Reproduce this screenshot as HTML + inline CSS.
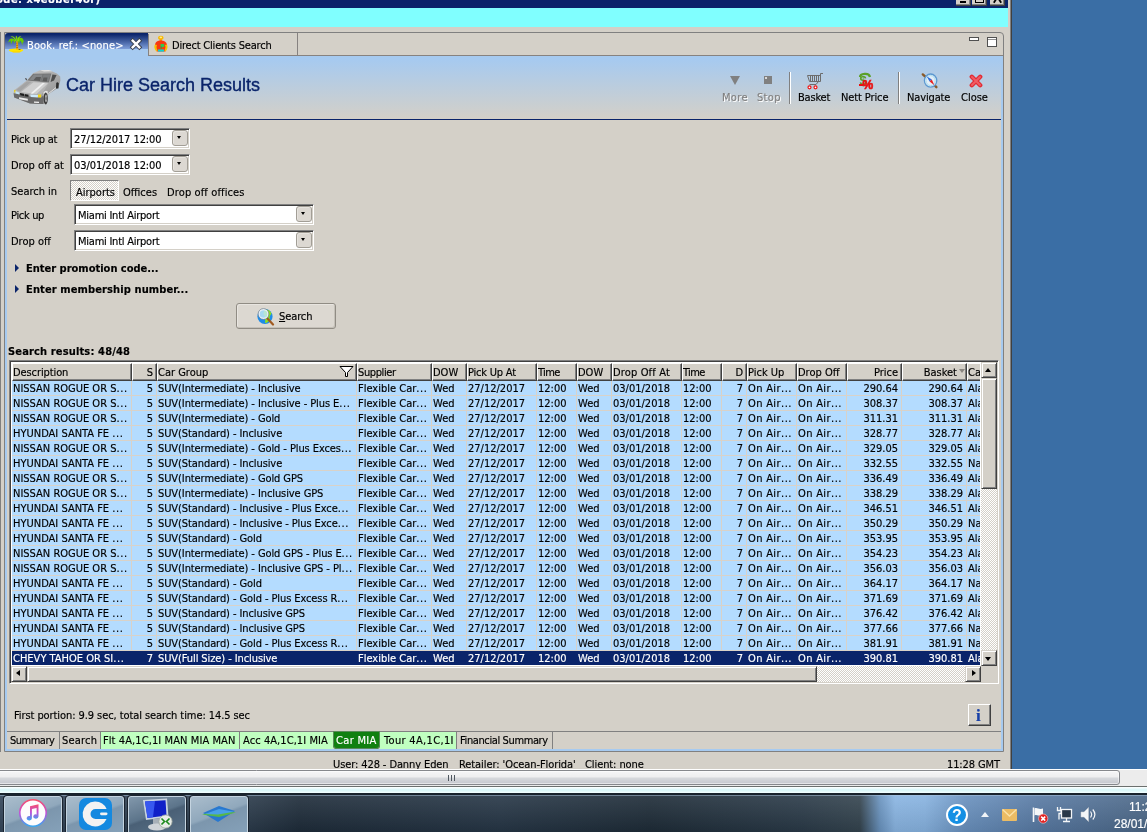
<!DOCTYPE html>
<html><head><meta charset="utf-8"><title>Car Hire Search Results</title>
<style>
*{box-sizing:border-box;margin:0;padding:0}
html,body{width:1147px;height:832px;overflow:hidden}
body{will-change:transform}
body{background:#3a6ea5;font-family:"DejaVu Sans Condensed","DejaVu Sans","Liberation Sans",sans-serif;font-size:11px;color:#000;position:relative;line-height:13px;-webkit-text-stroke:.16px}
.a{position:absolute;white-space:nowrap}
.x{position:absolute;white-space:nowrap;line-height:20px;height:20px}
.t{position:absolute;white-space:nowrap;line-height:13px;height:13px}
#win{left:0;top:0;width:1012px;height:770px;background:#d4d0c8}
#navy{left:0;top:0;width:1008px;height:8px;background:#0a246a;overflow:hidden}
#cyan{left:0;top:8px;width:1008px;height:19px;background:#80ffff}
.cap{top:0;height:6px;width:15px;background:#d4d0c8;border-right:1px solid #404040;border-bottom:1px solid #404040;box-shadow:inset -1px -1px 0 #808080}
/* tab folder */
#folder{left:4px;top:32px;width:1000px;height:720px;border:1px solid #808080;border-radius:0 4px 0 0}
#tab1{left:5px;top:33px;width:143px;height:23px;background:linear-gradient(#0a246a 0,#0a246a 1px,#7e9fda 16px,#a6caf0 16px,#a6caf0 100%);border-radius:3px 0 0 0;color:#fff}
#content{left:5px;top:56px;width:998px;height:695px;background:#d4d0c8;border:2px solid #a6caf0;border-top:0}
#hdr{left:7px;top:56px;width:994px;height:63px;background:linear-gradient(#a6caf0 0,#a6caf0 3px,#d4d0c8 100%)}
#hline{left:7px;top:119px;width:994px;height:1px;background:#0a246a}
h1{position:absolute;left:66px;top:74px;font-family:"Liberation Sans",sans-serif;font-weight:normal;font-size:18px;line-height:22px;color:#0a246a;white-space:nowrap;letter-spacing:.2px}
.dis{color:#808080;text-shadow:1px 1px 0 #fff}
.vsep{top:72px;width:2px;height:32px;border-left:1px solid #808080;border-right:1px solid #fff}
/* inputs */
.sunk{background:#fff;border:1px solid;border-color:#808080 #fff #fff #808080;box-shadow:inset 1px 1px 0 #404040,inset -1px -1px 0 #d4d0c8}
.ddb{width:16px;height:16px;background:#dcd8d2;border:1px solid #a29e96;border-radius:3px;box-shadow:inset 1px 1px 0 #e6e3de}
.ddb:after{content:"";position:absolute;left:4px;top:5px;border:2.5px solid transparent;border-top:3px solid #000;border-bottom:0;width:0;height:0}
.tri{width:0;height:0;border:4px solid transparent;border-left:4px solid #0a246a;border-right:0}
b.t{font-weight:bold}
/* table */
#tbl{left:9px;top:360px;width:990px;height:324px;border:1px solid;border-color:#808080 #fff #fff #808080;box-shadow:inset 1px 1px 0 #404040,inset -1px -1px 0 #d4d0c8;background:#fff;overflow:hidden}
#tin{left:2px;top:2px;width:968px;height:303px;overflow:hidden;background:#b4dcff}
.thead{position:absolute;left:0;top:0;height:18px;width:970px;background:#d4d0c8}
.th{position:absolute;top:0;height:18px;background:#d4d0c8;border:1px solid;border-color:#fff #404040 #404040 #fff;box-shadow:inset -1px -1px 0 #808080;padding:2px 3px 0 0;line-height:13px;white-space:nowrap;overflow:hidden}
.th.r{text-align:right}
.flt{position:absolute;right:2px;top:2px}
.sortd{position:absolute;right:1px;top:5px;border:3.5px solid transparent;border-top:4px solid #8a8680;border-bottom:0;width:0;height:0}
.tr{position:absolute;left:0;width:970px;height:15px;background:#b4dcff;border-bottom:1px solid #d9d2c8}
.tr.sel{background:#0a246a;color:#fff;border-bottom-color:#fff}
.td{position:absolute;top:0;height:15px;line-height:14px;padding:1px 3px 0 1px;white-space:nowrap;overflow:hidden;border-right:1px solid #d9d2c8}
.tr.sel .td{border-right-color:#0a246a;height:14px}
.td.r{text-align:right}
.td.cg{letter-spacing:-.09px}
.td.oa{letter-spacing:.35px}
.e{font-style:normal;letter-spacing:.6px;margin-right:-.6px}
.sb{background:#d4d0c8;border:1px solid;border-color:#d4d0c8 #404040 #404040 #d4d0c8;box-shadow:inset 1px 1px 0 #fff,inset -1px -1px 0 #808080}
.track{background:#eae8e4 repeating-conic-gradient(#fff 0 25%,#d4d0c8 0 50%) 0 0/2px 2px}
.ar{position:absolute;width:0;height:0;border:3.5px solid transparent}
.ar.up{left:3px;top:0px;border-bottom:4px solid #000;border-top:0;top:5px}
.ar.dn{left:3px;top:6px;border-top:4px solid #000;border-bottom:0}
.ar.lf{left:4px;top:3px;border-right:4px solid #000;border-left:0}
.ar.rt{left:6px;top:3px;border-left:4px solid #000;border-right:0}
/* bottom tabs */
.bt{position:absolute;top:732px;height:17px;line-height:13px;padding:3px 0 0 4px;white-space:nowrap;border-right:1px solid #808080}
.g{background:#c0ffc0}
.tbb{top:796px;width:58px;height:40px;border:1px solid #c4d4e0;border-radius:3px;background:linear-gradient(160deg,#aabdcc 0,#90a8bc 45%,#7c96ad 50%,#86a2ba 100%);box-shadow:0 0 0 1px #1a2430}
</style></head><body>
<div id="win" class="a"></div>
<div id="navy" class="a"><span class="a" style="left:-4px;top:-7px;font-weight:bold;font-size:11px;color:#fff;letter-spacing:.5px">ode: x4e8ber4or)</span></div>
<div id="cyan" class="a"></div>
<div class="a cap" style="left:956px"></div><div class="a cap" style="left:972px"></div><div class="a cap" style="left:990px"></div>
<div class="a" style="left:960px;top:1px;width:6px;height:2px;background:#000"></div>
<div class="a" style="left:975px;top:0;width:9px;height:3px;border:1px solid #000;border-top:0"></div>
<svg class="a" style="left:993px;top:0" width="9" height="4" viewBox="0 0 9 4"><path d="M3.2 -1L0.8 2.8M5.8 -1L8.2 2.8" stroke="#000" stroke-width="1.8"/></svg>
<div class="a" style="left:0;top:32px;width:1px;height:720px;background:#808080"></div>
<div class="a" style="left:1010px;top:0;width:1px;height:770px;background:#808080"></div><div class="a" style="left:1011px;top:0;width:1px;height:770px;background:#404040"></div>

<div id="folder" class="a"></div>
<div id="content" class="a"></div>
<div id="tab1" class="a"></div>
<div class="a" style="left:148px;top:55px;width:855px;height:1px;background:#868280"></div>
<div class="a" style="left:148px;top:34px;width:1px;height:21px;background:#868280"></div>
<div class="a" style="left:297px;top:33px;width:1px;height:22px;background:#868280"></div>
<div id="hdr" class="a"></div>
<div id="hline" class="a"></div>

<!-- top tabs -->
<svg class="a" style="left:6px;top:34px" width="20" height="20" viewBox="6 34 20 20">
 <ellipse cx="16" cy="50.3" rx="7.2" ry="1.9" fill="#ffe600"/><path d="M12 51.2H21L20 52.4H12.8Z" fill="#ffd400"/>
 <path d="M16.2 41C16.6 44 16.3 47 15.9 49.6L18 49.6C18.4 46.5 18.3 43.5 17.6 41Z" fill="#f4b000"/>
 <path d="M16.6 43.4L17.6 43M16.4 45.6L17.8 45.2M16.4 47.6L17.8 47.4" stroke="#b05000" stroke-width=".9"/>
 <path d="M18.6 49.2L20.6 49L20.2 50L18.4 50Z" fill="#805010"/>
 <path d="M16.4 41.4C14 38 11 37.6 9.4 39.6L8 42.4L9.6 41.6L10.6 40.6L11 44.2L12.6 41L13.6 40.4L14 43.4L15.4 41.2Z" fill="#68cc00"/>
 <path d="M17 41.2C18.4 37.6 21.6 37 23 39L24.2 42.6L23 41.4L22.4 45L21 41.6L19.8 40.8L19.2 44L18 41.4Z" fill="#68cc00"/>
 <path d="M16.8 41C15.4 37.4 13 35.8 10.6 36.4C13 36.6 14.6 38.4 15.4 41ZM17 41C17.4 37.6 19 35.8 21.4 36.2C19.6 37 18.6 38.8 18.4 41Z" fill="#8ce000"/>
 <path d="M16.6 40.6C15.6 38 15.4 36.6 16.2 35.8C17.4 36.6 17.6 38.4 17.4 40.6Z" fill="#7cd800"/>
</svg>
<svg class="a" style="left:131px;top:39px;overflow:visible" width="10" height="10" viewBox="0 0 12 12"><path d="M2 2L10 10M10 2L2 10" stroke="#38404c" stroke-width="5" stroke-linecap="square"/><path d="M2 2L10 10M10 2L2 10" stroke="#fff" stroke-width="2.8" stroke-linecap="square"/></svg>
<svg class="a" style="left:152px;top:34px" width="18" height="20" viewBox="152 34 18 20">
 <ellipse cx="160.8" cy="37.8" rx="2.7" ry="2.1" fill="#f8b800"/><ellipse cx="160.8" cy="37.4" rx="1.3" ry=".8" fill="#fde890"/>
 <path d="M159.6 39.4H162V41.4H159.6Z" fill="#f8a000"/>
 <path d="M155 45C155.4 41.6 158 40.6 160.8 40.6S166.4 41.6 167 45L165.4 51.6H156.8Z" fill="#f83810"/>
 <path d="M155 44.4C153.6 46.4 154.4 49 156.4 51.4L157.6 50.6C156.4 48.6 156.2 46.4 157 45ZM166.8 44.4C168.2 46.4 167.6 49 165.6 51.4L164.4 50.6C165.6 48.6 165.8 46.4 165 45Z" fill="#f8c000"/>
 <rect x="160.6" y="44" width="3.6" height="3" fill="#30c850"/><rect x="160.6" y="46.4" width="1.2" height="2.4" fill="#30a040"/>
 <rect x="158" y="49.4" width="6" height="2.2" fill="#10d0d0"/>
</svg>
<div class="a" style="left:969px;top:37px;width:10px;height:4px;background:#fff;border:1px solid #505050"></div>
<div class="a" style="left:987px;top:37px;width:10px;height:10px;background:linear-gradient(#fff 1px,#909090 1px,#909090 2px,#fff 2px);border:1px solid #505050"></div>


<!-- header -->
<svg class="a" style="left:8px;top:64px" width="60" height="46" viewBox="8 64 60 46">
 <defs><linearGradient id="cg" x1="0" y1="0" x2="1" y2="1"><stop offset="0" stop-color="#cfcfcf"/><stop offset=".55" stop-color="#a9a9a9"/><stop offset="1" stop-color="#8a8a8a"/></linearGradient></defs>
 <path d="M13.5 93L14.6 90L26.8 80.4L32.9 73.2L40 70.2L49 70L56.8 73.6L60.2 76.6L60.4 80.4L58.6 87.5L48 94.5L46.6 104.2L43.4 103.9L30 103.4L14.2 97.6Z" fill="url(#cg)"/>
 <path d="M40 70.2L49 70L52.5 71.2L44 71.6Z" fill="#e6e6e6"/>
 <path d="M27.2 80.4L33.2 73.8L51.4 73.4L48.8 82.4Z" fill="#747474"/>
 <path d="M29.5 79.8L34 74.6L42.5 74.4L40.5 81Z" fill="#858789"/><path d="M43.5 74.4L50.4 74.2L48.2 81.6L41.5 81Z" fill="#7c7e80"/>
 <path d="M33.5 80.2L36 77L41 77L40 81ZM42.5 81L43.5 77.5L47.5 77.6L46.8 81.6Z" fill="#5c5c5c"/>
 <path d="M52.4 74.4L56.6 75L54 80.4L50.6 82Z" fill="#4e4e4e"/>
 <path d="M25 78L26.4 78.2L27.2 80.2L26 80.2Z" fill="#4a4a4a"/>
 <path d="M14.8 90.2L26.8 80.8L48.8 82.8L43.2 92L41 95L19.8 93Z" fill="#b4b4b4"/>
 <path d="M21 92L33.5 82.2L48 83.2L36.5 94Z" fill="#cfcfcf"/><path d="M30.5 93.4L42.5 83L45 83.1L33 93.8Z" fill="#f0f0f0"/>
 <path d="M16 90L27 81.4L31.5 81.8L20 91.5Z" fill="#a4a4a4"/>
 <path d="M13.6 93.2L19.5 94L30 96.5L41.4 97.6L43.6 95L43.2 103.9L30 103.4L14.2 97.6Z" fill="#6a6a6a"/>
 <path d="M14 90L15.3 89.8L16 92.5L14.4 92.6Z" fill="#e8d020"/><path d="M15.4 91L19.2 92.6L19.4 94.6L15.6 93.4Z" fill="#c4e4f8"/>
 <path d="M19.8 93L24 93.8L24 96L20.4 95.2ZM24.6 94L28.6 94.8L28.4 96.8L24.8 96.2Z" fill="#1c1c1c"/>
 <path d="M30.2 94.6L38 95L37.8 97.4L30.8 97Z" fill="#cdeafc"/><path d="M38 94.4L41.2 94.6L41 97.6L38 97.4Z" fill="#f0d418"/>
 <path d="M19 97.2L27.8 98.8L27.8 100.8L19.2 99.2Z" fill="#ececec"/><path d="M34 101.6L39 101.8L39 103L34 102.8Z" fill="#f4f4f4"/>
 <path d="M43.4 92.6Q45.4 89.6 47.8 91.6L47 104L44.6 104.6Z" fill="#e4e4e4"/>
 <ellipse cx="45.7" cy="98.4" rx="2.1" ry="6" fill="#3a3a3a"/><ellipse cx="46" cy="98.4" rx="1.1" ry="3.8" fill="#a8a8a8"/><ellipse cx="46.1" cy="98.4" rx=".5" ry="1.6" fill="#5a5a5a"/>
 <path d="M56.2 83Q57.6 81.6 58.8 83.2L58.4 88.4L56 88.4Z" fill="#2e2e2e"/>
 <path d="M48.4 93.6L56 87.6" stroke="#e8e8e8" stroke-width=".9"/>
</svg>
<div class="a" style="left:730px;top:76px;width:0;height:0;border:5.5px solid transparent;border-top:9px solid #808080;border-bottom:0"></div>
<div class="a" style="left:764px;top:76px;width:8px;height:8px;background:#808080"></div>
<div class="a" style="left:765px;top:77px;width:2px;height:2px;background:#d8d8d8"></div>
<div class="a vsep" style="left:789px"></div>
<svg class="a" style="left:804px;top:70px" width="22" height="22" viewBox="804 70 22 22"><path d="M807.5 75.5H820.5V81.5H809.5ZM820.5 76V73.5H823M810.5 76V81M812.5 76V81M814.5 76V81M816.5 76V81M818.5 76V81M818.5 81.5L816 84.5H809.5" fill="none" stroke="#6c6c6c" stroke-width="1"/><circle cx="809.5" cy="87.3" r="1.5" fill="#fff" stroke="#f01010" stroke-width="1.2"/><circle cx="815.5" cy="87.3" r="1.5" fill="#fff" stroke="#f01010" stroke-width="1.2"/></svg>
<svg class="a" style="left:856px;top:70px" width="22" height="22" viewBox="856 70 22 22"><path d="M860 77C860 73.5 869 72 870 77" fill="none" stroke="#5aa028" stroke-width="2.2"/><text x="859.5" y="85" font-family="Liberation Sans,sans-serif" font-weight="bold" font-size="13" fill="#5aa028">$</text><text x="862.5" y="88.5" font-family="Liberation Sans,sans-serif" font-weight="bold" font-size="12" fill="#e81010" stroke="#e81010" stroke-width=".6">%</text><rect x="859" y="84" width="4.5" height="2" fill="#e81010"/></svg>
<div class="a vsep" style="left:898px"></div>
<svg class="a" style="left:920px;top:70px" width="20" height="20" viewBox="920 70 20 20"><path d="M922.8 74.4L925 76.4M936.4 87.2L934.4 85.2" stroke="#8a5a28" stroke-width="2.4" stroke-linecap="round"/><ellipse cx="930.6" cy="80.6" rx="6.2" ry="6.6" fill="#e4eef8" stroke="#5c98d0" stroke-width="1.3"/><ellipse cx="930.6" cy="80.6" rx="4.6" ry="5" fill="none" stroke="#a8dcec" stroke-width="1"/><path d="M926.6 76.2L931.8 79.6L929.6 81.6Z" fill="#2c6cd8"/><path d="M934.4 85.2L929.6 81.6L931.8 79.6Z" fill="#e82020"/></svg>
<svg class="a" style="left:969px;top:74px" width="14" height="14" viewBox="0 0 14 14"><path d="M2.8 2.8L11.2 11.2M11.2 2.8L2.8 11.2" stroke="#e22c34" stroke-width="4.4" stroke-linecap="round"/><path d="M3 3L11 11M11 3L3 11" stroke="#f25c64" stroke-width="2" stroke-linecap="round"/></svg>


<!-- form -->
<div class="a sunk" style="left:70px;top:128px;width:120px;height:21px"></div><div class="a ddb" style="left:172px;top:130px"></div>
<div class="a sunk" style="left:70px;top:154px;width:120px;height:21px"></div><div class="a ddb" style="left:172px;top:156px"></div>
<div class="a" style="left:70px;top:180px;width:49px;height:21px;background:#eae8e4 repeating-conic-gradient(#fff 0 25%,#d4d0c8 0 50%) 0 0/2px 2px;border:1px solid;border-color:#808080 #fff #fff #808080"></div>
<div class="a sunk" style="left:74px;top:204px;width:240px;height:21px"></div><div class="a ddb" style="left:296px;top:206px"></div>
<div class="a sunk" style="left:74px;top:230px;width:240px;height:21px"></div><div class="a ddb" style="left:296px;top:232px"></div>
<div class="a tri" style="left:15px;top:264px"></div>
<div class="a tri" style="left:15px;top:285px"></div>
<div class="a" style="left:236px;top:303px;width:100px;height:26px;border:1px solid #908c84;border-radius:3px;background:#dcd8d1;box-shadow:inset 1px 1px 0 #e8e5e0,inset -1px -1px 0 #c4c0b8"></div>
<svg class="a" style="left:256px;top:307px" width="19" height="19" viewBox="0 0 19 19"><circle cx="9" cy="9.5" r="7.6" fill="#1e8ce8"/><path d="M9 3C12 2 15 4 15.5 7C14 8 13 10 14 13C12 15 10 16.5 9 16C10 13 8 12 9 9C7 8 7 5 9 3Z" fill="#8ee020"/><path d="M11 11L17 17.5" stroke="#a05a20" stroke-width="2.2" stroke-linecap="round"/><circle cx="7.5" cy="7" r="4.6" fill="#bfe6f4" fill-opacity=".85" stroke="#f0f4f8" stroke-width="1.5"/><circle cx="7.5" cy="7" r="5.4" fill="none" stroke="#6c7c8c" stroke-width=".7"/></svg>
<span class="x" style="left:279px;top:307px;letter-spacing:-.1px"><u>S</u>earch</span>

<div id="tbl" class="a"><div id="tin" class="a">
<div class="thead">
<div class="th" style="left:0px;width:120px;letter-spacing:-0.10px"><span>Description</span></div>
<div class="th r" style="left:120px;width:25px"><span>S</span></div>
<div class="th" style="left:145px;width:200px"><span>Car Group</span><svg class="flt" width="15" height="11" viewBox="0 0 15 11"><path d="M1 0.5H14L8.5 6.5V10.5H6.5V6.5Z" fill="#fff" stroke="#000" stroke-width="1"/></svg></div>
<div class="th" style="left:345px;width:75px;letter-spacing:-0.40px"><span>Supplier</span></div>
<div class="th" style="left:420px;width:35px"><span>DOW</span></div>
<div class="th" style="left:455px;width:70px;letter-spacing:-0.20px"><span>Pick Up At</span></div>
<div class="th" style="left:525px;width:40px;letter-spacing:-0.60px"><span>Time</span></div>
<div class="th" style="left:565px;width:35px"><span>DOW</span></div>
<div class="th" style="left:600px;width:70px;letter-spacing:0.15px"><span>Drop Off At</span></div>
<div class="th" style="left:670px;width:40px;letter-spacing:-0.60px"><span>Time</span></div>
<div class="th r" style="left:710px;width:25px"><span>D</span></div>
<div class="th" style="left:735px;width:50px"><span>Pick Up</span></div>
<div class="th" style="left:785px;width:50px"><span>Drop Off</span></div>
<div class="th r" style="left:835px;width:55px"><span>Price</span></div>
<div class="th r" style="left:890px;width:65px;padding-right:9px"><span>Basket</span><i class="sortd"></i></div>
<div class="th" style="left:955px;width:40px"><span>Ca</span></div>
</div>
<div class="tr" style="top:18px">
<div class="td" style="left:0px;width:120px">NISSAN ROGUE OR S<i class="e">...</i></div>
<div class="td r" style="left:120px;width:25px">5</div>
<div class="td cg" style="left:145px;width:200px">SUV(Intermediate) - Inclusive</div>
<div class="td" style="left:345px;width:75px">Flexible Car<i class="e">...</i></div>
<div class="td" style="left:420px;width:35px">Wed</div>
<div class="td" style="left:455px;width:70px">27/12/2017</div>
<div class="td" style="left:525px;width:40px">12:00</div>
<div class="td" style="left:565px;width:35px">Wed</div>
<div class="td" style="left:600px;width:70px">03/01/2018</div>
<div class="td" style="left:670px;width:40px">12:00</div>
<div class="td r" style="left:710px;width:25px">7</div>
<div class="td oa" style="left:735px;width:50px">On Air<i class="e">...</i></div>
<div class="td oa" style="left:785px;width:50px">On Air<i class="e">...</i></div>
<div class="td r" style="left:835px;width:55px">290.64</div>
<div class="td r" style="left:890px;width:65px">290.64</div>
<div class="td" style="left:955px;width:40px">Ala</div>
</div>
<div class="tr" style="top:33px">
<div class="td" style="left:0px;width:120px">NISSAN ROGUE OR S<i class="e">...</i></div>
<div class="td r" style="left:120px;width:25px">5</div>
<div class="td cg" style="left:145px;width:200px">SUV(Intermediate) - Inclusive - Plus E<i class="e">...</i></div>
<div class="td" style="left:345px;width:75px">Flexible Car<i class="e">...</i></div>
<div class="td" style="left:420px;width:35px">Wed</div>
<div class="td" style="left:455px;width:70px">27/12/2017</div>
<div class="td" style="left:525px;width:40px">12:00</div>
<div class="td" style="left:565px;width:35px">Wed</div>
<div class="td" style="left:600px;width:70px">03/01/2018</div>
<div class="td" style="left:670px;width:40px">12:00</div>
<div class="td r" style="left:710px;width:25px">7</div>
<div class="td oa" style="left:735px;width:50px">On Air<i class="e">...</i></div>
<div class="td oa" style="left:785px;width:50px">On Air<i class="e">...</i></div>
<div class="td r" style="left:835px;width:55px">308.37</div>
<div class="td r" style="left:890px;width:65px">308.37</div>
<div class="td" style="left:955px;width:40px">Ala</div>
</div>
<div class="tr" style="top:48px">
<div class="td" style="left:0px;width:120px">NISSAN ROGUE OR S<i class="e">...</i></div>
<div class="td r" style="left:120px;width:25px">5</div>
<div class="td cg" style="left:145px;width:200px">SUV(Intermediate) - Gold</div>
<div class="td" style="left:345px;width:75px">Flexible Car<i class="e">...</i></div>
<div class="td" style="left:420px;width:35px">Wed</div>
<div class="td" style="left:455px;width:70px">27/12/2017</div>
<div class="td" style="left:525px;width:40px">12:00</div>
<div class="td" style="left:565px;width:35px">Wed</div>
<div class="td" style="left:600px;width:70px">03/01/2018</div>
<div class="td" style="left:670px;width:40px">12:00</div>
<div class="td r" style="left:710px;width:25px">7</div>
<div class="td oa" style="left:735px;width:50px">On Air<i class="e">...</i></div>
<div class="td oa" style="left:785px;width:50px">On Air<i class="e">...</i></div>
<div class="td r" style="left:835px;width:55px">311.31</div>
<div class="td r" style="left:890px;width:65px">311.31</div>
<div class="td" style="left:955px;width:40px">Ala</div>
</div>
<div class="tr" style="top:63px">
<div class="td" style="left:0px;width:120px">HYUNDAI SANTA FE <i class="e">...</i></div>
<div class="td r" style="left:120px;width:25px">5</div>
<div class="td cg" style="left:145px;width:200px">SUV(Standard) - Inclusive</div>
<div class="td" style="left:345px;width:75px">Flexible Car<i class="e">...</i></div>
<div class="td" style="left:420px;width:35px">Wed</div>
<div class="td" style="left:455px;width:70px">27/12/2017</div>
<div class="td" style="left:525px;width:40px">12:00</div>
<div class="td" style="left:565px;width:35px">Wed</div>
<div class="td" style="left:600px;width:70px">03/01/2018</div>
<div class="td" style="left:670px;width:40px">12:00</div>
<div class="td r" style="left:710px;width:25px">7</div>
<div class="td oa" style="left:735px;width:50px">On Air<i class="e">...</i></div>
<div class="td oa" style="left:785px;width:50px">On Air<i class="e">...</i></div>
<div class="td r" style="left:835px;width:55px">328.77</div>
<div class="td r" style="left:890px;width:65px">328.77</div>
<div class="td" style="left:955px;width:40px">Ala</div>
</div>
<div class="tr" style="top:78px">
<div class="td" style="left:0px;width:120px">NISSAN ROGUE OR S<i class="e">...</i></div>
<div class="td r" style="left:120px;width:25px">5</div>
<div class="td cg" style="left:145px;width:200px">SUV(Intermediate) - Gold - Plus Exces<i class="e">...</i></div>
<div class="td" style="left:345px;width:75px">Flexible Car<i class="e">...</i></div>
<div class="td" style="left:420px;width:35px">Wed</div>
<div class="td" style="left:455px;width:70px">27/12/2017</div>
<div class="td" style="left:525px;width:40px">12:00</div>
<div class="td" style="left:565px;width:35px">Wed</div>
<div class="td" style="left:600px;width:70px">03/01/2018</div>
<div class="td" style="left:670px;width:40px">12:00</div>
<div class="td r" style="left:710px;width:25px">7</div>
<div class="td oa" style="left:735px;width:50px">On Air<i class="e">...</i></div>
<div class="td oa" style="left:785px;width:50px">On Air<i class="e">...</i></div>
<div class="td r" style="left:835px;width:55px">329.05</div>
<div class="td r" style="left:890px;width:65px">329.05</div>
<div class="td" style="left:955px;width:40px">Ala</div>
</div>
<div class="tr" style="top:93px">
<div class="td" style="left:0px;width:120px">HYUNDAI SANTA FE <i class="e">...</i></div>
<div class="td r" style="left:120px;width:25px">5</div>
<div class="td cg" style="left:145px;width:200px">SUV(Standard) - Inclusive</div>
<div class="td" style="left:345px;width:75px">Flexible Car<i class="e">...</i></div>
<div class="td" style="left:420px;width:35px">Wed</div>
<div class="td" style="left:455px;width:70px">27/12/2017</div>
<div class="td" style="left:525px;width:40px">12:00</div>
<div class="td" style="left:565px;width:35px">Wed</div>
<div class="td" style="left:600px;width:70px">03/01/2018</div>
<div class="td" style="left:670px;width:40px">12:00</div>
<div class="td r" style="left:710px;width:25px">7</div>
<div class="td oa" style="left:735px;width:50px">On Air<i class="e">...</i></div>
<div class="td oa" style="left:785px;width:50px">On Air<i class="e">...</i></div>
<div class="td r" style="left:835px;width:55px">332.55</div>
<div class="td r" style="left:890px;width:65px">332.55</div>
<div class="td" style="left:955px;width:40px">Na</div>
</div>
<div class="tr" style="top:108px">
<div class="td" style="left:0px;width:120px">NISSAN ROGUE OR S<i class="e">...</i></div>
<div class="td r" style="left:120px;width:25px">5</div>
<div class="td cg" style="left:145px;width:200px">SUV(Intermediate) - Gold GPS</div>
<div class="td" style="left:345px;width:75px">Flexible Car<i class="e">...</i></div>
<div class="td" style="left:420px;width:35px">Wed</div>
<div class="td" style="left:455px;width:70px">27/12/2017</div>
<div class="td" style="left:525px;width:40px">12:00</div>
<div class="td" style="left:565px;width:35px">Wed</div>
<div class="td" style="left:600px;width:70px">03/01/2018</div>
<div class="td" style="left:670px;width:40px">12:00</div>
<div class="td r" style="left:710px;width:25px">7</div>
<div class="td oa" style="left:735px;width:50px">On Air<i class="e">...</i></div>
<div class="td oa" style="left:785px;width:50px">On Air<i class="e">...</i></div>
<div class="td r" style="left:835px;width:55px">336.49</div>
<div class="td r" style="left:890px;width:65px">336.49</div>
<div class="td" style="left:955px;width:40px">Ala</div>
</div>
<div class="tr" style="top:123px">
<div class="td" style="left:0px;width:120px">NISSAN ROGUE OR S<i class="e">...</i></div>
<div class="td r" style="left:120px;width:25px">5</div>
<div class="td cg" style="left:145px;width:200px">SUV(Intermediate) - Inclusive GPS</div>
<div class="td" style="left:345px;width:75px">Flexible Car<i class="e">...</i></div>
<div class="td" style="left:420px;width:35px">Wed</div>
<div class="td" style="left:455px;width:70px">27/12/2017</div>
<div class="td" style="left:525px;width:40px">12:00</div>
<div class="td" style="left:565px;width:35px">Wed</div>
<div class="td" style="left:600px;width:70px">03/01/2018</div>
<div class="td" style="left:670px;width:40px">12:00</div>
<div class="td r" style="left:710px;width:25px">7</div>
<div class="td oa" style="left:735px;width:50px">On Air<i class="e">...</i></div>
<div class="td oa" style="left:785px;width:50px">On Air<i class="e">...</i></div>
<div class="td r" style="left:835px;width:55px">338.29</div>
<div class="td r" style="left:890px;width:65px">338.29</div>
<div class="td" style="left:955px;width:40px">Ala</div>
</div>
<div class="tr" style="top:138px">
<div class="td" style="left:0px;width:120px">HYUNDAI SANTA FE <i class="e">...</i></div>
<div class="td r" style="left:120px;width:25px">5</div>
<div class="td cg" style="left:145px;width:200px">SUV(Standard) - Inclusive - Plus Exce<i class="e">...</i></div>
<div class="td" style="left:345px;width:75px">Flexible Car<i class="e">...</i></div>
<div class="td" style="left:420px;width:35px">Wed</div>
<div class="td" style="left:455px;width:70px">27/12/2017</div>
<div class="td" style="left:525px;width:40px">12:00</div>
<div class="td" style="left:565px;width:35px">Wed</div>
<div class="td" style="left:600px;width:70px">03/01/2018</div>
<div class="td" style="left:670px;width:40px">12:00</div>
<div class="td r" style="left:710px;width:25px">7</div>
<div class="td oa" style="left:735px;width:50px">On Air<i class="e">...</i></div>
<div class="td oa" style="left:785px;width:50px">On Air<i class="e">...</i></div>
<div class="td r" style="left:835px;width:55px">346.51</div>
<div class="td r" style="left:890px;width:65px">346.51</div>
<div class="td" style="left:955px;width:40px">Ala</div>
</div>
<div class="tr" style="top:153px">
<div class="td" style="left:0px;width:120px">HYUNDAI SANTA FE <i class="e">...</i></div>
<div class="td r" style="left:120px;width:25px">5</div>
<div class="td cg" style="left:145px;width:200px">SUV(Standard) - Inclusive - Plus Exce<i class="e">...</i></div>
<div class="td" style="left:345px;width:75px">Flexible Car<i class="e">...</i></div>
<div class="td" style="left:420px;width:35px">Wed</div>
<div class="td" style="left:455px;width:70px">27/12/2017</div>
<div class="td" style="left:525px;width:40px">12:00</div>
<div class="td" style="left:565px;width:35px">Wed</div>
<div class="td" style="left:600px;width:70px">03/01/2018</div>
<div class="td" style="left:670px;width:40px">12:00</div>
<div class="td r" style="left:710px;width:25px">7</div>
<div class="td oa" style="left:735px;width:50px">On Air<i class="e">...</i></div>
<div class="td oa" style="left:785px;width:50px">On Air<i class="e">...</i></div>
<div class="td r" style="left:835px;width:55px">350.29</div>
<div class="td r" style="left:890px;width:65px">350.29</div>
<div class="td" style="left:955px;width:40px">Na</div>
</div>
<div class="tr" style="top:168px">
<div class="td" style="left:0px;width:120px">HYUNDAI SANTA FE <i class="e">...</i></div>
<div class="td r" style="left:120px;width:25px">5</div>
<div class="td cg" style="left:145px;width:200px">SUV(Standard) - Gold</div>
<div class="td" style="left:345px;width:75px">Flexible Car<i class="e">...</i></div>
<div class="td" style="left:420px;width:35px">Wed</div>
<div class="td" style="left:455px;width:70px">27/12/2017</div>
<div class="td" style="left:525px;width:40px">12:00</div>
<div class="td" style="left:565px;width:35px">Wed</div>
<div class="td" style="left:600px;width:70px">03/01/2018</div>
<div class="td" style="left:670px;width:40px">12:00</div>
<div class="td r" style="left:710px;width:25px">7</div>
<div class="td oa" style="left:735px;width:50px">On Air<i class="e">...</i></div>
<div class="td oa" style="left:785px;width:50px">On Air<i class="e">...</i></div>
<div class="td r" style="left:835px;width:55px">353.95</div>
<div class="td r" style="left:890px;width:65px">353.95</div>
<div class="td" style="left:955px;width:40px">Ala</div>
</div>
<div class="tr" style="top:183px">
<div class="td" style="left:0px;width:120px">NISSAN ROGUE OR S<i class="e">...</i></div>
<div class="td r" style="left:120px;width:25px">5</div>
<div class="td cg" style="left:145px;width:200px">SUV(Intermediate) - Gold GPS - Plus E<i class="e">...</i></div>
<div class="td" style="left:345px;width:75px">Flexible Car<i class="e">...</i></div>
<div class="td" style="left:420px;width:35px">Wed</div>
<div class="td" style="left:455px;width:70px">27/12/2017</div>
<div class="td" style="left:525px;width:40px">12:00</div>
<div class="td" style="left:565px;width:35px">Wed</div>
<div class="td" style="left:600px;width:70px">03/01/2018</div>
<div class="td" style="left:670px;width:40px">12:00</div>
<div class="td r" style="left:710px;width:25px">7</div>
<div class="td oa" style="left:735px;width:50px">On Air<i class="e">...</i></div>
<div class="td oa" style="left:785px;width:50px">On Air<i class="e">...</i></div>
<div class="td r" style="left:835px;width:55px">354.23</div>
<div class="td r" style="left:890px;width:65px">354.23</div>
<div class="td" style="left:955px;width:40px">Ala</div>
</div>
<div class="tr" style="top:198px">
<div class="td" style="left:0px;width:120px">NISSAN ROGUE OR S<i class="e">...</i></div>
<div class="td r" style="left:120px;width:25px">5</div>
<div class="td cg" style="left:145px;width:200px">SUV(Intermediate) - Inclusive GPS - Pl<i class="e">...</i></div>
<div class="td" style="left:345px;width:75px">Flexible Car<i class="e">...</i></div>
<div class="td" style="left:420px;width:35px">Wed</div>
<div class="td" style="left:455px;width:70px">27/12/2017</div>
<div class="td" style="left:525px;width:40px">12:00</div>
<div class="td" style="left:565px;width:35px">Wed</div>
<div class="td" style="left:600px;width:70px">03/01/2018</div>
<div class="td" style="left:670px;width:40px">12:00</div>
<div class="td r" style="left:710px;width:25px">7</div>
<div class="td oa" style="left:735px;width:50px">On Air<i class="e">...</i></div>
<div class="td oa" style="left:785px;width:50px">On Air<i class="e">...</i></div>
<div class="td r" style="left:835px;width:55px">356.03</div>
<div class="td r" style="left:890px;width:65px">356.03</div>
<div class="td" style="left:955px;width:40px">Ala</div>
</div>
<div class="tr" style="top:213px">
<div class="td" style="left:0px;width:120px">HYUNDAI SANTA FE <i class="e">...</i></div>
<div class="td r" style="left:120px;width:25px">5</div>
<div class="td cg" style="left:145px;width:200px">SUV(Standard) - Gold</div>
<div class="td" style="left:345px;width:75px">Flexible Car<i class="e">...</i></div>
<div class="td" style="left:420px;width:35px">Wed</div>
<div class="td" style="left:455px;width:70px">27/12/2017</div>
<div class="td" style="left:525px;width:40px">12:00</div>
<div class="td" style="left:565px;width:35px">Wed</div>
<div class="td" style="left:600px;width:70px">03/01/2018</div>
<div class="td" style="left:670px;width:40px">12:00</div>
<div class="td r" style="left:710px;width:25px">7</div>
<div class="td oa" style="left:735px;width:50px">On Air<i class="e">...</i></div>
<div class="td oa" style="left:785px;width:50px">On Air<i class="e">...</i></div>
<div class="td r" style="left:835px;width:55px">364.17</div>
<div class="td r" style="left:890px;width:65px">364.17</div>
<div class="td" style="left:955px;width:40px">Na</div>
</div>
<div class="tr" style="top:228px">
<div class="td" style="left:0px;width:120px">HYUNDAI SANTA FE <i class="e">...</i></div>
<div class="td r" style="left:120px;width:25px">5</div>
<div class="td cg" style="left:145px;width:200px">SUV(Standard) - Gold - Plus Excess R<i class="e">...</i></div>
<div class="td" style="left:345px;width:75px">Flexible Car<i class="e">...</i></div>
<div class="td" style="left:420px;width:35px">Wed</div>
<div class="td" style="left:455px;width:70px">27/12/2017</div>
<div class="td" style="left:525px;width:40px">12:00</div>
<div class="td" style="left:565px;width:35px">Wed</div>
<div class="td" style="left:600px;width:70px">03/01/2018</div>
<div class="td" style="left:670px;width:40px">12:00</div>
<div class="td r" style="left:710px;width:25px">7</div>
<div class="td oa" style="left:735px;width:50px">On Air<i class="e">...</i></div>
<div class="td oa" style="left:785px;width:50px">On Air<i class="e">...</i></div>
<div class="td r" style="left:835px;width:55px">371.69</div>
<div class="td r" style="left:890px;width:65px">371.69</div>
<div class="td" style="left:955px;width:40px">Ala</div>
</div>
<div class="tr" style="top:243px">
<div class="td" style="left:0px;width:120px">HYUNDAI SANTA FE <i class="e">...</i></div>
<div class="td r" style="left:120px;width:25px">5</div>
<div class="td cg" style="left:145px;width:200px">SUV(Standard) - Inclusive GPS</div>
<div class="td" style="left:345px;width:75px">Flexible Car<i class="e">...</i></div>
<div class="td" style="left:420px;width:35px">Wed</div>
<div class="td" style="left:455px;width:70px">27/12/2017</div>
<div class="td" style="left:525px;width:40px">12:00</div>
<div class="td" style="left:565px;width:35px">Wed</div>
<div class="td" style="left:600px;width:70px">03/01/2018</div>
<div class="td" style="left:670px;width:40px">12:00</div>
<div class="td r" style="left:710px;width:25px">7</div>
<div class="td oa" style="left:735px;width:50px">On Air<i class="e">...</i></div>
<div class="td oa" style="left:785px;width:50px">On Air<i class="e">...</i></div>
<div class="td r" style="left:835px;width:55px">376.42</div>
<div class="td r" style="left:890px;width:65px">376.42</div>
<div class="td" style="left:955px;width:40px">Ala</div>
</div>
<div class="tr" style="top:258px">
<div class="td" style="left:0px;width:120px">HYUNDAI SANTA FE <i class="e">...</i></div>
<div class="td r" style="left:120px;width:25px">5</div>
<div class="td cg" style="left:145px;width:200px">SUV(Standard) - Inclusive GPS</div>
<div class="td" style="left:345px;width:75px">Flexible Car<i class="e">...</i></div>
<div class="td" style="left:420px;width:35px">Wed</div>
<div class="td" style="left:455px;width:70px">27/12/2017</div>
<div class="td" style="left:525px;width:40px">12:00</div>
<div class="td" style="left:565px;width:35px">Wed</div>
<div class="td" style="left:600px;width:70px">03/01/2018</div>
<div class="td" style="left:670px;width:40px">12:00</div>
<div class="td r" style="left:710px;width:25px">7</div>
<div class="td oa" style="left:735px;width:50px">On Air<i class="e">...</i></div>
<div class="td oa" style="left:785px;width:50px">On Air<i class="e">...</i></div>
<div class="td r" style="left:835px;width:55px">377.66</div>
<div class="td r" style="left:890px;width:65px">377.66</div>
<div class="td" style="left:955px;width:40px">Na</div>
</div>
<div class="tr" style="top:273px">
<div class="td" style="left:0px;width:120px">HYUNDAI SANTA FE <i class="e">...</i></div>
<div class="td r" style="left:120px;width:25px">5</div>
<div class="td cg" style="left:145px;width:200px">SUV(Standard) - Gold - Plus Excess R<i class="e">...</i></div>
<div class="td" style="left:345px;width:75px">Flexible Car<i class="e">...</i></div>
<div class="td" style="left:420px;width:35px">Wed</div>
<div class="td" style="left:455px;width:70px">27/12/2017</div>
<div class="td" style="left:525px;width:40px">12:00</div>
<div class="td" style="left:565px;width:35px">Wed</div>
<div class="td" style="left:600px;width:70px">03/01/2018</div>
<div class="td" style="left:670px;width:40px">12:00</div>
<div class="td r" style="left:710px;width:25px">7</div>
<div class="td oa" style="left:735px;width:50px">On Air<i class="e">...</i></div>
<div class="td oa" style="left:785px;width:50px">On Air<i class="e">...</i></div>
<div class="td r" style="left:835px;width:55px">381.91</div>
<div class="td r" style="left:890px;width:65px">381.91</div>
<div class="td" style="left:955px;width:40px">Na</div>
</div>
<div class="tr sel" style="top:288px">
<div class="td" style="left:0px;width:120px">CHEVY TAHOE OR SI<i class="e">...</i></div>
<div class="td r" style="left:120px;width:25px">7</div>
<div class="td cg" style="left:145px;width:200px">SUV(Full Size) - Inclusive</div>
<div class="td" style="left:345px;width:75px">Flexible Car<i class="e">...</i></div>
<div class="td" style="left:420px;width:35px">Wed</div>
<div class="td" style="left:455px;width:70px">27/12/2017</div>
<div class="td" style="left:525px;width:40px">12:00</div>
<div class="td" style="left:565px;width:35px">Wed</div>
<div class="td" style="left:600px;width:70px">03/01/2018</div>
<div class="td" style="left:670px;width:40px">12:00</div>
<div class="td r" style="left:710px;width:25px">7</div>
<div class="td oa" style="left:735px;width:50px">On Air<i class="e">...</i></div>
<div class="td oa" style="left:785px;width:50px">On Air<i class="e">...</i></div>
<div class="td r" style="left:835px;width:55px">390.81</div>
<div class="td r" style="left:890px;width:65px">390.81</div>
<div class="td" style="left:955px;width:40px">Ala</div>
</div>
</div>

<!-- scrollbars (coords relative to #tbl padding box: origin x=10,y=361) -->
<div class="a track" style="left:971px;top:1px;width:16px;height:304px"></div>
<div class="a sb" style="left:971px;top:1px;width:16px;height:16px"><i class="ar up"></i></div>
<div class="a sb" style="left:971px;top:17px;width:16px;height:111px"></div>
<div class="a sb" style="left:971px;top:289px;width:16px;height:16px"><i class="ar dn"></i></div>
<div class="a track" style="left:1px;top:305px;width:970px;height:16px"></div>
<div class="a sb" style="left:1px;top:305px;width:16px;height:16px"><i class="ar lf"></i></div>
<div class="a sb" style="left:17px;top:305px;width:790px;height:16px"></div>
<div class="a sb" style="left:955px;top:305px;width:16px;height:16px"><i class="ar rt"></i></div>
<div class="a" style="left:971px;top:305px;width:16px;height:16px;background:#d4d0c8"></div>

</div>

<!-- bottom -->
<div class="a" style="left:968px;top:704px;width:23px;height:22px;background:#d4d0c8;border:1px solid;border-color:#fff #404040 #404040 #fff;box-shadow:inset -1px -1px 0 #808080"></div>
<span class="a" style="left:976px;top:706px;font-family:'Liberation Serif','DejaVu Serif',serif;font-weight:bold;font-size:17px;line-height:20px;color:#1840a8">i</span>
<div class="a" style="left:7px;top:731px;width:994px;height:1px;background:#808080"></div>
<div class="a" style="left:59px;top:732px;width:1px;height:17px;background:#808080"></div>
<div class="a" style="left:100px;top:732px;width:1px;height:17px;background:#808080"></div>
<div class="a g" style="left:101px;top:732px;width:138px;height:17px"></div>
<div class="a" style="left:239px;top:732px;width:1px;height:17px;background:#808080"></div>
<div class="a g" style="left:240px;top:732px;width:93px;height:17px"></div>
<div class="a" style="left:333px;top:731px;width:47px;height:18px;background:#108010;border-radius:0 0 4px 4px;box-shadow:0 0 0 1px #5a8a5a inset"></div>
<div class="a g" style="left:380px;top:732px;width:76px;height:17px"></div>
<div class="a" style="left:456px;top:732px;width:1px;height:17px;background:#808080"></div>
<div class="a" style="left:552px;top:732px;width:1px;height:17px;background:#808080"></div>

<span class="x" style="left:66px;top:75px;letter-spacing:0.00px;font-family:'Liberation Sans',sans-serif;font-size:18px;color:#0a246a;-webkit-text-stroke:.35px #0a246a;">Car Hire Search Results</span>
<span class="x" style="left:27px;top:36px;letter-spacing:0.12px;color:#fff;">Book. ref.: &lt;none&gt;</span>
<span class="x" style="left:172px;top:36px;letter-spacing:-0.20px;">Direct Clients Search</span>
<span class="x" style="left:722px;top:88px;letter-spacing:0.33px;color:#808080;text-shadow:1px 1px 0 #fff;">More</span>
<span class="x" style="left:757px;top:88px;letter-spacing:0.33px;color:#808080;text-shadow:1px 1px 0 #fff;">Stop</span>
<span class="x" style="left:798px;top:88px;letter-spacing:-0.20px;">Basket</span>
<span class="x" style="left:841px;top:88px;letter-spacing:-0.11px;">Nett Price</span>
<span class="x" style="left:907px;top:88px;letter-spacing:-0.14px;">Navigate</span>
<span class="x" style="left:961px;top:88px;letter-spacing:0.00px;">Close</span>
<span class="x" style="left:11px;top:130px;letter-spacing:-0.22px;">Pick up at</span>
<span class="x" style="left:74px;top:130px;letter-spacing:-0.07px;">27/12/2017 12:00</span>
<span class="x" style="left:11px;top:156px;letter-spacing:0.00px;">Drop off at</span>
<span class="x" style="left:74px;top:156px;letter-spacing:-0.07px;">03/01/2018 12:00</span>
<span class="x" style="left:11px;top:182px;letter-spacing:0.00px;">Search in</span>
<span class="x" style="left:76px;top:183px;letter-spacing:0.00px;">Airports</span>
<span class="x" style="left:123px;top:183px;letter-spacing:0.00px;">Offices</span>
<span class="x" style="left:167px;top:183px;letter-spacing:0.13px;">Drop off offices</span>
<span class="x" style="left:11px;top:206px;letter-spacing:-0.33px;">Pick up</span>
<span class="x" style="left:78px;top:206px;letter-spacing:-0.24px;">Miami Intl Airport</span>
<span class="x" style="left:11px;top:232px;letter-spacing:0.00px;">Drop off</span>
<span class="x" style="left:78px;top:232px;letter-spacing:-0.24px;">Miami Intl Airport</span>
<span class="x" style="left:26px;top:259px;letter-spacing:0.00px;font-weight:bold;">Enter promotion code...</span>
<span class="x" style="left:26px;top:280px;letter-spacing:0.12px;font-weight:bold;">Enter membership number...</span>
<span class="x" style="left:8px;top:342px;letter-spacing:0.15px;font-weight:bold;">Search results: 48/48</span>
<span class="x" style="left:14px;top:706px;letter-spacing:-0.08px;">First portion: 9.9 sec, total search time: 14.5 sec</span>
<span class="x" style="left:10px;top:731px;letter-spacing:-0.50px;">Summary</span>
<span class="x" style="left:62px;top:731px;letter-spacing:0.20px;">Search</span>
<span class="x" style="left:103px;top:731px;letter-spacing:0.09px;">Flt 4A,1C,1I MAN MIA MAN</span>
<span class="x" style="left:243px;top:731px;letter-spacing:0.07px;">Acc 4A,1C,1I MIA</span>
<span class="x" style="left:336px;top:731px;letter-spacing:0.33px;color:#fff;">Car MIA</span>
<span class="x" style="left:384px;top:731px;letter-spacing:0.33px;">Tour 4A,1C,1I</span>
<span class="x" style="left:460px;top:731px;letter-spacing:-0.38px;">Financial Summary</span>
<span class="x" style="left:333px;top:755px;letter-spacing:-0.10px;">User: 428 - Danny Eden</span>
<span class="x" style="left:459px;top:755px;letter-spacing:-0.08px;">Retailer: 'Ocean-Florida'</span>
<span class="x" style="left:585px;top:755px;letter-spacing:-0.09px;">Client: none</span>
<span class="x" style="left:947px;top:755px;letter-spacing:-0.12px;">11:28 GMT</span>

<!-- outer scrollbar strip + taskbar -->
<div class="a" style="left:0;top:769px;width:1147px;height:1px;background:#fff"></div>
<div class="a" style="left:0;top:770px;width:1147px;height:16px;background:#ececec"></div>
<div class="a" style="left:-3px;top:770px;width:1123px;height:15px;background:linear-gradient(#f6f6f7 0,#eeeeef 6px,#d6d8dc 7px,#c6c8ce 13px);border:1px solid #86888c;border-radius:3px;box-shadow:inset 0 0 0 1px rgba(255,255,255,.5)"></div>
<div class="a" style="left:448px;top:775px;width:1px;height:6px;background:#505860;box-shadow:3px 0 0 #505860,6px 0 0 #505860"></div>
<div class="a" style="left:0;top:786px;width:1147px;height:1px;background:#6c706e"></div>
<div class="a" style="left:0;top:787px;width:1147px;height:6px;background:linear-gradient(#fff,#d6f6f8 50%,#f4ffff)"></div>
<div id="tb" class="a" style="left:0;top:793px;width:1147px;height:39px;background:linear-gradient(rgba(255,255,255,.10),rgba(0,0,0,.10)),linear-gradient(90deg,#34465a 0,#2a3a4a 250px,#1e2c3a 300px,#263646 500px,#1e2c38 650px,#2a3a48 800px,#34444f 860px,#6a94c0 880px,#8ab6e4 895px,#88b4e2 925px,#6a92c0 965px,#587aa4 1040px,#4c6888 1147px)"></div>
<div class="a" style="left:0;top:793px;width:1147px;height:2px;background:#18222c"></div><div class="a" style="left:0;top:795px;width:1147px;height:1px;background:rgba(170,195,220,.5)"></div>
<div class="a tbb" style="left:4px"></div><div class="a tbb" style="left:66px"></div><div class="a tbb" style="left:128px;background:linear-gradient(160deg,#8298ac 0,#5c748a 45%,#4a6076 50%,#5a7288 100%)"></div><div class="a tbb" style="left:190px"></div>


<!-- taskbar icons -->
<svg class="a" style="left:18px;top:798px" width="30" height="30" viewBox="0 0 30 30"><defs><linearGradient id="it" x1="0" y1="0" x2="0" y2="1"><stop offset="0" stop-color="#f8506c"/><stop offset=".5" stop-color="#c050d8"/><stop offset="1" stop-color="#38a8f0"/></linearGradient></defs><circle cx="15" cy="15" r="13.2" fill="#fdfdfd" stroke="url(#it)" stroke-width="1.6"/><path d="M12 8.2L20.5 6.2V18.6A2.6 2.2 0 1 1 18.6 16.4V10L13.9 11.1V20.3A2.6 2.2 0 1 1 12 18.1Z" fill="url(#it)"/></svg>
<svg class="a" style="left:79px;top:798px" width="33" height="32" viewBox="0 0 33 32"><rect x="0" y="0" width="33" height="32" rx="7" fill="#1489e0"/><path d="M16 3.5A12.5 12.5 0 1 0 27.6 21H16.5A5 5 0 1 1 16.5 11H27.6A12.5 12.5 0 0 0 16 3.5Z" fill="#f2f2f2"/><rect x="19" y="13" width="10" height="5.6" rx="2.8" fill="#1489e0"/><rect x="21" y="14.4" width="7.5" height="2.8" rx="1.4" fill="#f2f2f2"/></svg>
<svg class="a" style="left:140px;top:798px" width="34" height="34" viewBox="0 0 34 34"><path d="M3 2L27 0.5L28.5 19L6 22Z" fill="#c8d4e0"/><path d="M5 3.5L25.5 2.2L26.5 17.5L7.5 20Z" fill="#1020c8"/><path d="M5 3.5L15 2.9L13 19.3L7.5 20Z" fill="#3858f0"/><path d="M13 21L21 20L22 26L13 27Z" fill="#a8b0b8"/><ellipse cx="17" cy="29" rx="9" ry="3.4" fill="#d0d4d8"/><circle cx="25.5" cy="23.5" r="6.6" fill="#e8ece8" stroke="#a0a8a0" stroke-width=".8"/><path d="M21.5 20.5L24.5 23.5L21.5 26.5M29.5 20.5L26.5 23.5L29.5 26.5" fill="none" stroke="#1c8a1c" stroke-width="1.6"/></svg>
<svg class="a" style="left:202px;top:805px" width="34" height="18" viewBox="0 0 34 18"><path d="M1 8L17 1L33 6L16 17Z" fill="#2878d0"/><path d="M0 9.5L16 6L34 7.5L17 12Z" fill="#58b848"/><path d="M3 9L17 4L32 6.8L16 9.5Z" fill="#48a0e8"/></svg>
<svg class="a" style="left:945px;top:803px" width="24" height="24" viewBox="0 0 24 24"><circle cx="12" cy="12" r="10" fill="#1590e4" stroke="#fff" stroke-width="2"/><text x="12" y="18" text-anchor="middle" font-family="Liberation Sans,sans-serif" font-weight="bold" font-size="16" fill="#fff">?</text></svg>
<div class="a" style="left:981px;top:812px;width:0;height:0;border:4.5px solid transparent;border-bottom:5px solid #f0f4f8;border-top:0"></div>
<svg class="a" style="left:1002px;top:809px" width="15" height="12" viewBox="0 0 15 12"><rect x="0" y="0" width="15" height="12" rx="1" fill="#ecbc64"/><path d="M0.5 0.5L7.5 7L14.5 0.5" fill="none" stroke="#fbe2a8" stroke-width="1.4"/></svg>
<svg class="a" style="left:1031px;top:806px" width="18" height="18" viewBox="0 0 18 18"><path d="M2.5 1.5V16" stroke="#f4f6f8" stroke-width="1.6"/><path d="M3.5 2.5C6 1 8 4 12 2.5V9.5C8 11 6 8 3.5 9.5Z" fill="#f4f6f8"/><circle cx="12.2" cy="12.6" r="4.6" fill="#e02020" stroke="#f8d0d0" stroke-width=".6"/><path d="M10.2 10.6L14.2 14.6M14.2 10.6L10.2 14.6" stroke="#fff" stroke-width="1.5"/></svg>
<svg class="a" style="left:1056px;top:806px" width="17" height="17" viewBox="0 0 17 17"><rect x="5.5" y="3.5" width="10" height="8.5" fill="#28384a" stroke="#f4f6f8" stroke-width="1.3"/><path d="M7 15.5H14M10.5 12V15.5" stroke="#f4f6f8" stroke-width="1.3"/><path d="M1.5 1V4.5M4.5 1V4.5M0.8 4.5H5.2V7.5H3V13.5" fill="none" stroke="#f4f6f8" stroke-width="1.3"/></svg>
<svg class="a" style="left:1080px;top:806px" width="17" height="17" viewBox="0 0 17 17"><path d="M1 6H4L8.5 1.5V15.5L4 11H1Z" fill="#f4f6f8" stroke="#c8ccd0" stroke-width=".5"/><path d="M10.5 5.5C12 7.5 12 9.5 10.5 11.5M12.8 3.5C15.3 6.5 15.3 10.5 12.8 13.5" fill="none" stroke="#f4f6f8" stroke-width="1.2"/></svg>
<span class="x" style="left:1129px;top:797px;color:#fff;font-family:'Liberation Sans',sans-serif;font-size:12px">11:28</span>
<span class="x" style="left:1114px;top:814px;color:#fff;font-family:'Liberation Sans',sans-serif;font-size:12px">28/01/2018</span>
</body></html>
